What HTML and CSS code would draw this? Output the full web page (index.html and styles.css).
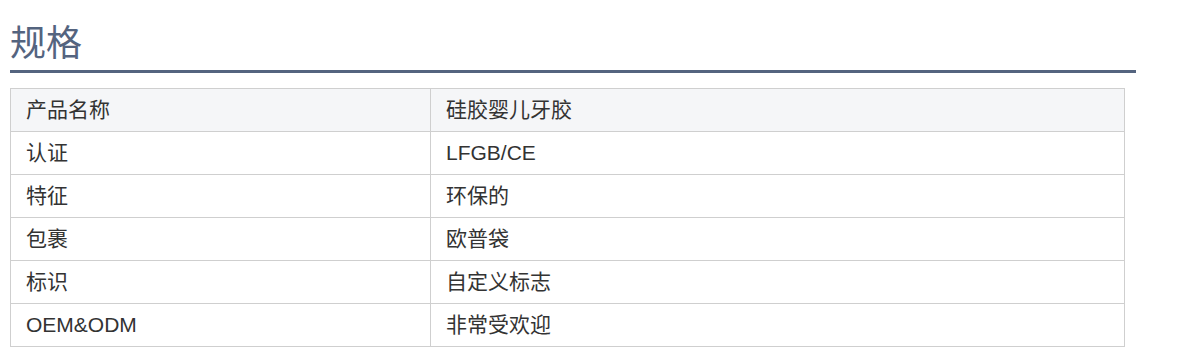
FILE: index.html
```html
<!DOCTYPE html>
<html lang="zh-CN">
<head>
<meta charset="utf-8">
<link rel="stylesheet" href="styles.css">
</head>
<body>
<section class="spec">
  <h2 class="spec-title">规格</h2>
  <table class="spec-table">
    <colgroup><col class="col-key"><col class="col-val"></colgroup>
    <tbody>
      <tr class="head-row"><td>产品名称</td><td>硅胶婴儿牙胶</td></tr>
      <tr><td>认证</td><td>LFGB/CE</td></tr>
      <tr><td>特征</td><td>环保的</td></tr>
      <tr><td>包裹</td><td>欧普袋</td></tr>
      <tr><td>标识</td><td>自定义标志</td></tr>
      <tr><td>OEM&amp;ODM</td><td>非常受欢迎</td></tr>
    </tbody>
  </table>
</section>
</body>
</html>
```
FILE: styles.css
```css
html, body {
  margin: 0;
  padding: 0;
  background: #fff;
}
body {
  font-family: "Liberation Sans", "Noto Sans CJK SC", sans-serif;
  color: #333;
}
.spec {
  padding: 20px 0 0 10px;
  width: 1126px;
}
.spec-title {
  margin: 0;
  font-family: "Noto Sans CJK SC", sans-serif;
  font-weight: 400;
  font-size: 36px;
  line-height: 40px;
  color: #54647f;
  padding-bottom: 10px;
  border-bottom: 3px solid #54647f;
}
.spec-table {
  margin-top: 15px;
  width: 1115px;
  border-collapse: collapse;
  table-layout: fixed;
  font-size: 21px;
}
.col-key { width: 420px; }
.spec-table td {
  border: 1px solid #cfcfcf;
  height: 43px;
  padding: 0 15px;
  box-sizing: border-box;
  vertical-align: middle;
  line-height: 24px;
}
.head-row td {
  background: #f5f6f8;
}
```
